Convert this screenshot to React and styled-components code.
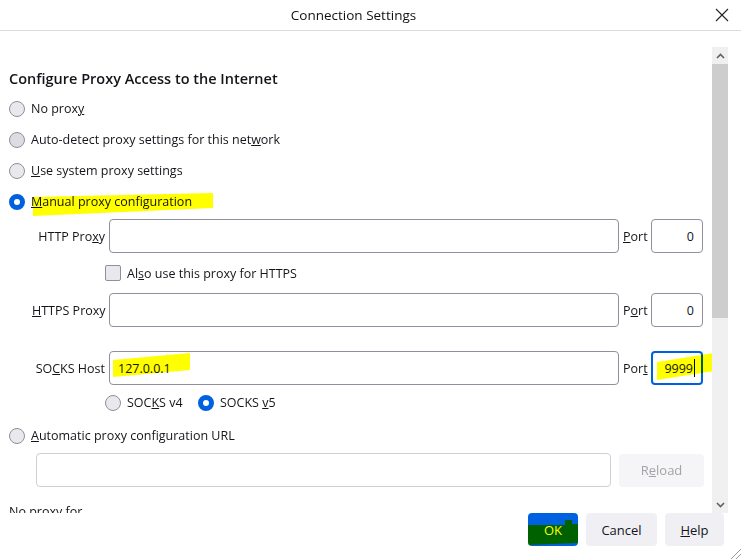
import styled, { createGlobalStyle } from 'styled-components';

const GlobalStyle = createGlobalStyle`
    html, body {
        margin: 0;
        padding: 0;
        background: #ffffff;
    }
    body {
        font-family: "Open Sans", "Noto Sans", sans-serif;
        font-size: 12.5px;
        color: #15141a;
    }
`;

const Window = styled.div`
    position: relative;
    width: 741px;
    height: 559px;
    display: flex;
    flex-direction: column;
    overflow: hidden;
    background: #ffffff;
`;

const TitleBar = styled.header`
    flex: none;
    height: 30px;
    display: flex;
    align-items: center;
    border-bottom: 1px solid #dcdcdc;
`;

const Title = styled.div`
    flex: 1;
    text-align: center;
    font-size: 13.5px;
    color: #111;
`;

const CloseButton = styled.div`
    width: 34px;
    height: 30px;
    display: flex;
    align-items: center;
    justify-content: flex-start;
    padding-left: 8px;
    box-sizing: border-box;
`;

const Main = styled.div`
    flex: none;
    height: 482px;
    display: flex;
`;

const Content = styled.div`
    flex: 1;
    overflow: hidden;
    padding: 38px 0 0 9px;
`;

const Heading = styled.h2`
    margin: 0 0 4px;
    font-size: 14.5px;
    font-weight: 600;
    line-height: 20px;
`;

const RadioRow = styled.label`
    display: flex;
    align-items: center;
    gap: 6px;
    height: ${(p) => p.h || 31}px;
    position: relative;
`;

const Radio = styled.span`
    flex: none;
    width: 16px;
    height: 16px;
    box-sizing: border-box;
    border-radius: 50%;
    border: ${(p) => (p.checked ? '5px solid #0061e0' : '1px solid #8f8f9d')};
    background: ${(p) => (p.checked ? '#ffffff' : p.hover ? '#dcdce2' : '#e9e9ed')};
`;

const Check = styled.span`
    flex: none;
    width: 16px;
    height: 16px;
    box-sizing: border-box;
    border-radius: 2px;
    border: 1px solid #8f8f9d;
    background: #e9e9ed;
`;

const ProxyGrid = styled.div`
    display: grid;
    grid-template-columns: 73px 510px 24px 52px;
    grid-template-rows: 34px 40px 34px 24px 34px 35px;
    column-gap: 4px;
    margin: 2px 0 0 23px;
    align-items: center;
`;

const FieldLabel = styled.span`
    text-align: right;
    white-space: nowrap;
`;

const PortLabel = styled.span`
    white-space: nowrap;
`;

const Box = styled.div`
    position: relative;
    height: 34px;
    box-sizing: border-box;
    border: ${(p) => (p.focused ? '2px solid #0061e0' : `1px solid ${p.disabled ? '#cfcfd8' : '#8f8f9d'}`)};
    border-radius: 4px;
    background: #ffffff;
    display: flex;
    align-items: center;
    justify-content: ${(p) => (p.right ? 'flex-end' : 'flex-start')};
    padding: 0 ${(p) => (p.focused ? 6 : 8)}px 0 ${(p) => (p.focused ? 7 : 8)}px;
`;

const Caret = styled.span`
    display: inline-block;
    width: 1px;
    height: 18px;
    margin-left: 1px;
    background: #000;
`;

const CheckRow = styled.label`
    grid-column: 1 / 3;
    padding-left: 73px;
    display: flex;
    align-items: center;
    gap: 6px;
`;

const VersionRow = styled.div`
    grid-column: 1 / 3;
    padding-left: 73px;
    display: flex;
    align-items: center;
`;

const VersionOption = styled.label`
    display: flex;
    align-items: center;
    gap: 6px;
    width: ${(p) => p.w}px;
`;

const UrlRow = styled.div`
    display: flex;
    gap: 8px;
    margin: 2px 0 0 27px;
    align-items: center;
`;

const UrlBox = styled(Box)`
    width: 575px;
`;

const ReloadButton = styled.div`
    width: 85px;
    height: 33px;
    border-radius: 4px;
    background: #f5f5f7;
    color: #a3a3a8;
    display: flex;
    align-items: center;
    justify-content: center;
    font-size: 13px;
`;

const NoProxy = styled.div`
    margin-top: 16px;
    line-height: 18px;
`;

const Scrollbar = styled.div`
    flex: none;
    width: 16px;
    margin: 16px 13px 0 0;
    display: flex;
    flex-direction: column;
    background: #f0f0f0;
`;

const ScrollArrow = styled.div`
    height: ${(p) => p.h}px;
    display: flex;
    align-items: center;
    justify-content: center;
`;

const Thumb = styled.div`
    height: 254px;
    background: #cdcdcd;
`;

const Track = styled.div`
    flex: 1;
`;

const Footer = styled.footer`
    flex: 1;
    display: flex;
    justify-content: flex-end;
    align-items: flex-start;
    gap: 8px;
    padding-right: 17px;
`;

const Button = styled.div`
    position: relative;
    width: ${(p) => p.w}px;
    height: 33px;
    border-radius: 4px;
    background: ${(p) => (p.primary ? '#0061e0' : '#f0f0f4')};
    color: ${(p) => (p.primary ? '#ffffff' : '#15141a')};
    display: flex;
    align-items: center;
    justify-content: center;
    font-size: 13px;
`;

const Marker = styled.span`
    position: absolute;
    left: ${(p) => p.x}px;
    top: ${(p) => p.y}px;
    width: ${(p) => p.w}px;
    height: ${(p) => p.h}px;
    background: #ffff00;
    mix-blend-mode: multiply;
    clip-path: ${(p) => p.shape};
    pointer-events: none;
`;

const Grip = styled.svg`
    position: absolute;
    right: 0;
    bottom: 0;
`;

const HostCell = styled.div`
    position: relative;
`;

function Chevron({ up }) {
    return (
        <svg width="9" height="6" viewBox="0 0 9 6">
            <path
                d={up ? 'M1 5 L4.5 1.5 L8 5' : 'M1 1 L4.5 4.5 L8 1'}
                fill="none"
                stroke="#606060"
                strokeWidth="1.6"
            />
        </svg>
    );
}

export default function App() {
    return (
        <Window>
            <GlobalStyle />
            <TitleBar>
                <Title>Connection Settings</Title>
                <CloseButton>
                    <svg width="14" height="14" viewBox="0 0 14 14">
                        <path d="M1 1 L13 13 M13 1 L1 13" stroke="#222" strokeWidth="1.1" />
                    </svg>
                </CloseButton>
            </TitleBar>
            <Main>
                <Content>
                    <Heading>Configure Proxy Access to the Internet</Heading>
                    <RadioRow>
                        <Radio />
                        <span>No prox<u>y</u></span>
                    </RadioRow>
                    <RadioRow>
                        <Radio hover />
                        <span>Auto-detect proxy settings for this net<u>w</u>ork</span>
                    </RadioRow>
                    <RadioRow>
                        <Radio />
                        <span><u>U</u>se system proxy settings</span>
                    </RadioRow>
                    <RadioRow>
                        <Radio checked />
                        <span><u>M</u>anual proxy configuration</span>
                        <Marker
                            x={24}
                            y={7}
                            w={180}
                            h={23}
                            shape="polygon(0 4px, 100% 0, 100% 15px, 0 100%)"
                        />
                    </RadioRow>

                    <ProxyGrid>
                        <FieldLabel>HTTP Pro<u>x</u>y</FieldLabel>
                        <Box />
                        <PortLabel><u>P</u>ort</PortLabel>
                        <Box right>0</Box>

                        <CheckRow>
                            <Check />
                            <span>Al<u>s</u>o use this proxy for HTTPS</span>
                        </CheckRow>
                        <span />
                        <span />

                        <FieldLabel><u>H</u>TTPS Proxy</FieldLabel>
                        <Box />
                        <PortLabel>P<u>o</u>rt</PortLabel>
                        <Box right>0</Box>

                        <span />
                        <span />
                        <span />
                        <span />

                        <FieldLabel>SO<u>C</u>KS Host</FieldLabel>
                        <HostCell>
                            <Box>127.0.0.1</Box>
                            <Marker
                                x={4}
                                y={2}
                                w={77}
                                h={24}
                                shape="polygon(0 7px, 100% 0, 100% 17px, 0 100%)"
                            />
                        </HostCell>
                        <PortLabel>Por<u>t</u></PortLabel>
                        <HostCell>
                            <Box right focused>
                                9999<Caret />
                            </Box>
                            <Marker
                                x={6}
                                y={1}
                                w={63}
                                h={28}
                                shape="polygon(0 10px, 100% 0, 100% 18px, 0 100%)"
                            />
                        </HostCell>

                        <VersionRow>
                            <VersionOption w={93}>
                                <Radio />
                                <span>SOC<u>K</u>S v4</span>
                            </VersionOption>
                            <VersionOption w={120}>
                                <Radio checked />
                                <span>SOCKS <u>v</u>5</span>
                            </VersionOption>
                        </VersionRow>
                    </ProxyGrid>

                    <RadioRow>
                        <Radio />
                        <span><u>A</u>utomatic proxy configuration URL</span>
                    </RadioRow>
                    <UrlRow>
                        <UrlBox disabled />
                        <ReloadButton>R<u>e</u>load</ReloadButton>
                    </UrlRow>
                    <NoProxy>No proxy for</NoProxy>
                </Content>
                <Scrollbar>
                    <ScrollArrow h={17}>
                        <Chevron up />
                    </ScrollArrow>
                    <Thumb />
                    <Track />
                    <ScrollArrow h={16}>
                        <Chevron />
                    </ScrollArrow>
                </Scrollbar>
            </Main>
            <Footer>
                <Button primary w={50}>
                    OK
                    <Marker
                        x={0}
                        y={7}
                        w={50}
                        h={25}
                        shape="polygon(0 5px, 37px 5px, 37px 0, 44px 0, 44px 4px, 100% 4px, 100% 23px, 0 100%)"
                    />
                </Button>
                <Button w={71}>Cancel</Button>
                <Button w={59}>
                    <span><u>H</u>elp</span>
                </Button>
            </Footer>
            <Grip width="12" height="12" viewBox="0 0 12 12">
                <path d="M12 2 L2 12 M12 7 L7 12" stroke="#9a9a9a" strokeWidth="1" />
            </Grip>
        </Window>
    );
}
